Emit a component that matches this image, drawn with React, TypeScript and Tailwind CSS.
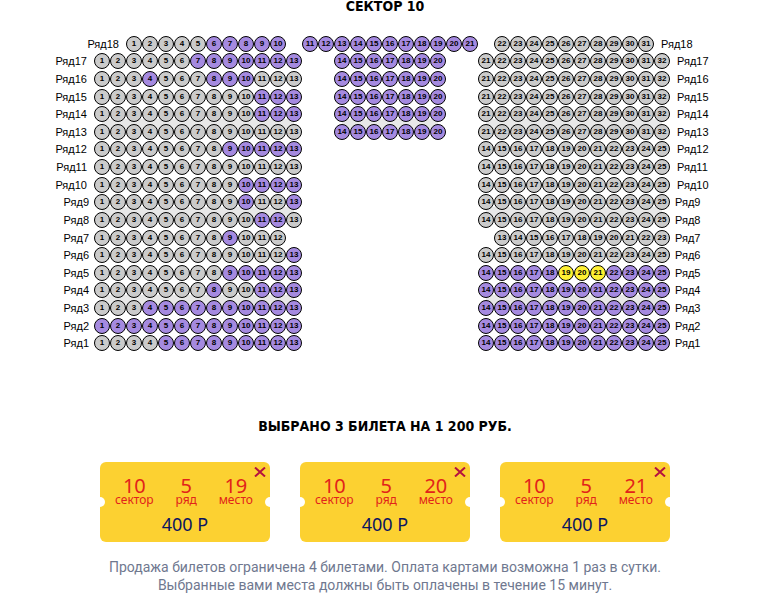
type Block = { offset: number; from: number; to: number; taken: (n: number) => boolean };
type Row = { row: number; blocks: Block[] };

const all = () => true;
const none = () => false;
const after = (start: number) => (n: number) => n >= start;
const only = (...seats: number[]) => (n: number) => seats.includes(n);

const left = (free: (n: number) => boolean, to = 13): Block => ({ offset: 0, from: 1, to, taken: free });
const upper = (row: number, free: (n: number) => boolean): Row => ({
  row,
  blocks: [
    left(free),
    { offset: 2, from: 14, to: 20, taken: all },
    { offset: 2, from: 21, to: 32, taken: none },
  ],
});
const lower = (row: number, free: (n: number) => boolean, right = none as (n: number) => boolean): Row => ({
  row,
  blocks: [left(free), { offset: 11, from: 14, to: 25, taken: right }],
});

const rows: Row[] = [
  {
    row: 18,
    blocks: [
      { offset: 0, from: 1, to: 10, taken: after(6) },
      { offset: 1, from: 11, to: 21, taken: all },
      { offset: 1, from: 22, to: 31, taken: none },
    ],
  },
  upper(17, after(7)),
  upper(16, only(4, 8, 9, 10)),
  upper(15, after(11)),
  upper(14, after(11)),
  upper(13, none),
  lower(12, after(9)),
  lower(11, none),
  lower(10, after(10)),
  lower(9, only(10, 13)),
  lower(8, only(11, 12)),
  { row: 7, blocks: [left(only(9), 12), { offset: 13, from: 13, to: 23, taken: none }] },
  lower(6, only(13)),
  lower(5, after(9), all),
  lower(4, only(8, 11, 12, 13), all),
  lower(3, after(4), all),
  lower(2, all, all),
  lower(1, after(5), all),
];

const tickets = [
  { sector: 10, row: 5, seat: 19 },
  { sector: 10, row: 5, seat: 20 },
  { sector: 10, row: 5, seat: 21 },
];

function Seat({ row, n, open }: { row: number; n: number; open: boolean }) {
  const chosen = n > 13 && tickets.some((t) => t.row === row && t.seat === n);
  const fill = chosen ? "bg-[#fff033]" : open ? "bg-[#a58ae0]" : "bg-[#cbcbcb]";
  return (
    <button
      type="button"
      disabled={!open && !chosen}
      aria-label={`Ряд ${row}, место ${n}`}
      className={`flex size-4 shrink-0 items-center justify-center rounded-full border border-black text-[8px] leading-none font-bold text-black ${fill}`}
    >
      {n}
    </button>
  );
}

// Every fifth row has a grey aisle strip above it.
const aisleRows = [13, 8, 3];
const aisle = "before:absolute before:inset-x-2 before:-top-[5px] before:-z-10 before:h-3 before:bg-[#e8e8e8]";

function SeatRow({ row, blocks }: Row) {
  const inset = row === 18;
  const pad = row > 9 ? "px-[7px]" : "px-[5px]";
  return (
    <div className="flex flex-1 items-center">
      <span className={`shrink-0 text-right ${pad} ${inset ? "w-20" : "w-12"}`}>Ряд{row}</span>
      {blocks.map((b) => (
        <div
          key={b.from}
          className={`relative flex ${aisleRows.includes(row) ? aisle : ""}`}
          style={{ marginLeft: b.offset * 16 }}
        >
          {Array.from({ length: b.to - b.from + 1 }, (_, i) => (
            <Seat key={i} row={row} n={b.from + i} open={b.taken(b.from + i)} />
          ))}
        </div>
      ))}
      <span className={`shrink-0 ${pad}`}>Ряд{row}</span>
    </div>
  );
}

function Part({ value, label }: { value: number; label: string }) {
  return (
    <div className="flex flex-col items-center">
      <span className="text-xl leading-5">{value}</span>
      <span className="text-xs leading-2">{label}</span>
    </div>
  );
}

function Ticket({ sector, row, seat }: { sector: number; row: number; seat: number }) {
  return (
    <li className="relative h-20 w-[170px] overflow-hidden rounded-md bg-[#fcd131] pt-[14px] text-[#e2231a]">
      <span className="absolute top-[35px] -left-[5px] size-[10px] rounded-full bg-white" />
      <span className="absolute top-[35px] -right-[5px] size-[10px] rounded-full bg-white" />
      <button type="button" aria-label="Удалить билет" className="absolute top-[5px] right-1 text-[#b5123f]">
        <svg width="12" height="10" viewBox="0 0 12 10" fill="none" stroke="currentColor" strokeWidth="2">
          <path d="M1 0.5 11 9.5M11 0.5 1 9.5" />
        </svg>
      </button>
      <div className="flex justify-between pr-[17px] pl-[15px]">
        <Part value={sector} label="сектор" />
        <Part value={row} label="ряд" />
        <Part value={seat} label="место" />
      </div>
      <p className="mt-2 text-center text-lg leading-6 text-[#0b1560]">400 Р</p>
    </li>
  );
}

const heading = "text-center font-['DejaVu_Sans_Condensed','DejaVu_Sans',sans-serif] text-sm font-bold text-black";

export default function App() {
  return (
    <main className="bg-white font-['Noto_Sans',sans-serif]">
      <h1 className={`${heading} leading-3`}>СЕКТОР 10</h1>
      <section
        aria-label="Схема зала"
        className="isolate mx-auto mt-[23px] flex h-[317px] w-[678px] flex-col font-['Liberation_Sans',Arial,sans-serif] text-[11px] leading-4 text-black"
      >
        {rows.map((r) => (
          <SeatRow key={r.row} {...r} />
        ))}
      </section>
      <h2 className={`${heading} mt-16 leading-5`}>ВЫБРАНО 3 БИЛЕТА НА 1 200 РУБ.</h2>
      <ul className="mt-[26px] flex justify-center gap-[30px]">
        {tickets.map((t) => (
          <Ticket key={t.seat} {...t} />
        ))}
      </ul>
      <p className="mx-auto mt-4 max-w-[600px] text-center font-['Roboto',sans-serif] text-sm leading-[18px] text-[#6f788f]">
        Продажа билетов ограничена 4 билетами. Оплата картами возможна 1 раз в сутки.
        <br />
        Выбранные вами места должны быть оплачены в течение 15 минут.
      </p>
    </main>
  );
}
